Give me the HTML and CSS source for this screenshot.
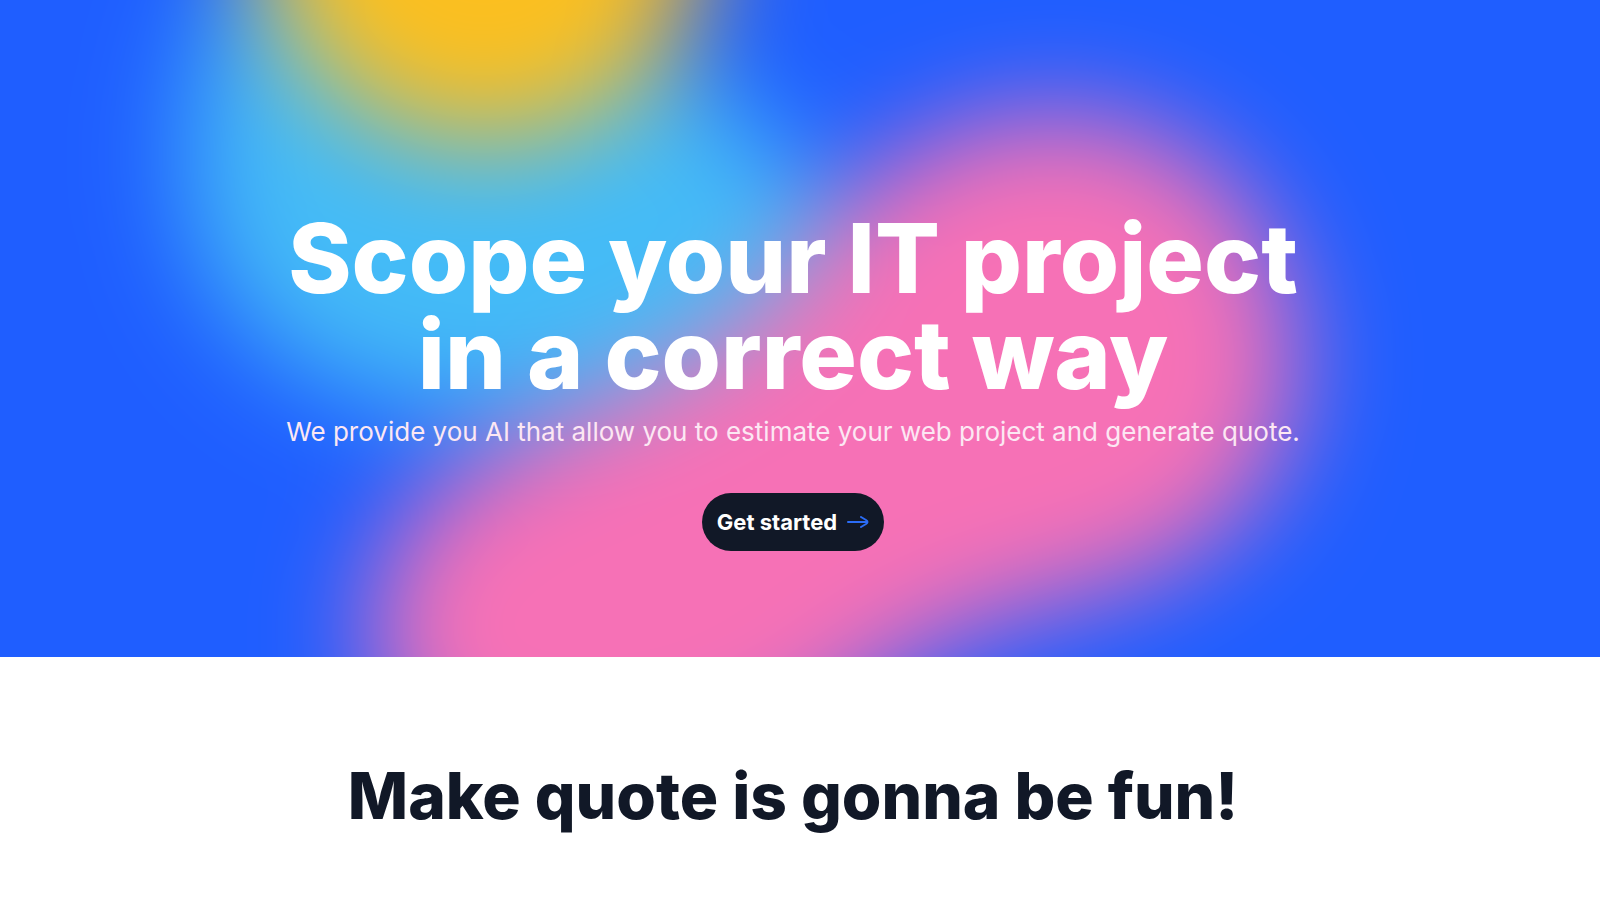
FILE: index.html
```
<!DOCTYPE html>
<html lang="en">
<head>
    <meta charset="UTF-8">
    <meta name="viewport" content="width=device-width, initial-scale=1.0">
    <title>Scope your IT project</title>
    <link rel="stylesheet" href="styles.css">
</head>
<body>
    <header class="hero">
        <svg class="hero-bg" viewBox="0 0 1600 657" preserveAspectRatio="xMidYMid slice" aria-hidden="true">
            <defs>
                <filter id="blur" filterUnits="userSpaceOnUse" x="-300" y="-500" width="2200" height="1600" color-interpolation-filters="sRGB">
                    <feGaussianBlur stdDeviation="54"/>
                </filter>
            </defs>
            <g filter="url(#blur)">
                <rect x="-300" y="-500" width="2200" height="1600" fill="#1f5eff"/>
                <path d="M270 -80C180 40 155 200 230 305C290 385 390 420 520 415L860 330C850 220 790 130 680 70L640 -60Z" fill="#44bbf7"/>
                <circle cx="484" cy="-85" r="226" fill="#fbbf20"/>
                <path d="M374 657C365 560 410 490 520 440C640 385 745 345 805 255C860 165 960 112 1060 112C1200 118 1290 220 1298 350C1300 480 1220 550 1120 588C990 620 930 640 850 700C720 820 390 830 374 657Z" fill="#f671b6"/>
            </g>
        </svg>
        <div class="container">
            <h1>Scope your IT project<br>in a correct way</h1>
            <p class="subtitle">We provide you AI that allow you to estimate your web project and generate quote.</p>
            <a class="btn" href="#quote">
                Get started
                <svg class="arrow" viewBox="0 0 22 12" aria-hidden="true">
                    <path d="M1 6H20M14 1L19 4Q22 6 19 8L14 11"/>
                </svg>
            </a>
        </div>
    </header>
    <section class="quote" id="quote">
        <h2>Make quote is gonna be fun!</h2>
    </section>
</body>
</html>
```

FILE: styles.css
```
* {
    box-sizing: border-box;
}
body {
    margin: 0;
    font-family: 'Inter', sans-serif;
    background-color: #ffffff;
    color: #111827;
}
.hero {
    position: relative;
    overflow: hidden;
    background-color: #1f5eff;
    padding: 210px 14px 106px 0;
}
.hero-bg {
    position: absolute;
    inset: 0;
    width: 100%;
    height: 100%;
}
.container {
    position: relative;
    display: flex;
    flex-direction: column;
    align-items: center;
    text-align: center;
}
h1 {
    margin: 0;
    font-size: 96px;
    line-height: 96px;
    font-weight: 800;
    color: #ffffff;
}
.subtitle {
    margin: 10px 0 41px;
    font-size: 26px;
    line-height: 40px;
    color: #fce7f3;
}
.btn {
    display: flex;
    align-items: center;
    gap: 10px;
    height: 58px;
    padding: 0 15px;
    border-radius: 29px;
    background-color: #111827;
    color: #ffffff;
    font-size: 22px;
    font-weight: 700;
    text-decoration: none;
}
.arrow {
    width: 22px;
    height: 12px;
    fill: none;
    stroke: #2b6cf6;
    stroke-width: 2;
    stroke-linecap: round;
    stroke-linejoin: round;
}
.quote {
    padding: 99px 14px 60px 0;
    text-align: center;
}
h2 {
    margin: 0;
    font-size: 64px;
    line-height: 80px;
    font-weight: 800;
}
```
